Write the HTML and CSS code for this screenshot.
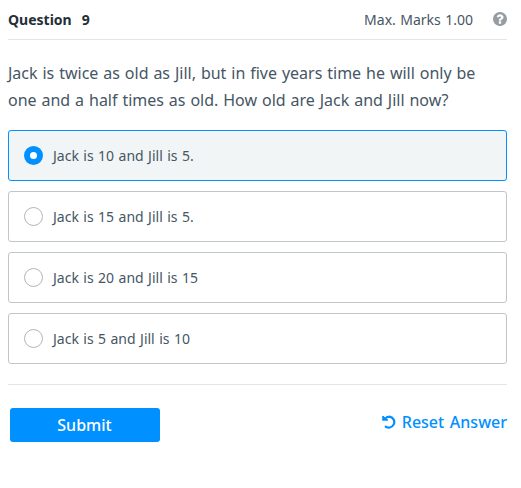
FILE: index.html
```html
<!DOCTYPE html>
<html lang="en">
<head>
<meta charset="utf-8">
<title>Question 9</title>
<link rel="stylesheet" href="styles.css">
</head>
<body>
<main class="quiz">
  <header class="header">
    <h1 class="title">Question <span class="number">9</span></h1>
    <div class="marks">Max. Marks 1.00
      <svg class="help" viewBox="128 128 1536 1536"><path fill="#959da3" d="M1024 1376v-192q0-14-9-23t-23-9h-192q-14 0-23 9t-9 23v192q0 14 9 23t23 9h192q14 0 23-9t9-23zm256-672q0-88-55.5-163t-138.5-116-170-41q-243 0-371 213-15 24 8 42l132 100q7 6 19 6 16 0 25-12 53-68 86-92 34-24 86-24 48 0 85.5 26t37.5 59q0 38-20 61t-68 45q-63 28-115.5 86.5t-52.5 125.5v36q0 14 9 23t23 9h192q14 0 23-9t9-23q0-19 21.5-49.5t54.5-49.5q32-18 49-28.5t46-35 44.5-48 28-60.5 12.5-81zm384 192q0 209-103 385.5t-279.5 279.5-385.5 103-385.5-103-279.5-279.5-103-385.5 103-385.5 279.5-279.5 385.5-103 385.5 103 279.5 279.5 103 385.5z"/></svg>
    </div>
  </header>
  <p class="question"><span class="line">Jack is twice as old as Jill, but in five years time he will only be</span> <span class="line last">one and a half times as old. How old are Jack and Jill now?</span></p>
  <div class="options">
    <label class="option selected"><span class="radio"></span><span class="label">Jack is 10 and Jill is 5.</span></label>
    <label class="option"><span class="radio"></span><span class="label">Jack is 15 and Jill is 5.</span></label>
    <label class="option"><span class="radio"></span><span class="label">Jack is 20 and Jill is 15</span></label>
    <label class="option"><span class="radio"></span><span class="label">Jack is 5 and Jill is 10</span></label>
  </div>
  <footer class="footer">
    <button class="submit">Submit</button>
    <a class="reset"><svg class="undo" viewBox="0 0 14 14"><path d="M2.8 3.9C4 2.4 5.5 1.6 7.4 1.6A5.5 5.5 0 1 1 3 11.1" fill="none" stroke="#0090ff" stroke-width="2.2"/><path d="M.2 1H1.6L3.8 3.2L6 4.4V5.8H.2Z" fill="#0090ff"/></svg>Reset Answer</a>
  </footer>
</main>
</body>
</html>
```
FILE: styles.css
```css
* { box-sizing: border-box; }
body { margin: 0; background: #fff; color: #465664; font-family: "Noto Sans", sans-serif; word-spacing: 0.8px; }
.quiz { width: 499px; margin-left: 8px; }
.header { display: flex; justify-content: space-between; align-items: center; height: 40px; border-bottom: 1px solid #e4e6e6; }
.title { margin: 0; font-size: 14px; font-weight: 700; color: #232f39; }
.number { margin-left: 5.5px; }
.marks { display: flex; align-items: center; gap: 20px; font-size: 14px; }
.help { width: 14px; height: 14px; margin-top: -1px; }
.question { margin: 20px 0 16px; font-size: 16px; line-height: 27px; word-spacing: 0.75px; }
.line { display: block; white-space: nowrap; }
.options { display: grid; gap: 10px; }
.option { display: flex; align-items: center; height: 51px; padding-left: 15px; border: 1px solid #c0c6c8; border-radius: 3px; font-size: 14px; }
.selected { background: #f1f5f6; border-color: #0090ff; }
.radio { width: 19px; height: 19px; margin-right: 10px; border: 1px solid #b5b5b5; border-radius: 50%; background: #fff; }
.selected .radio { border: 6px solid #0090ff; }
.footer { display: flex; justify-content: space-between; margin-top: 20px; padding: 23px 0 0 2px; border-top: 1px solid #e4e6e6; }
.submit { width: 150px; height: 34px; padding: 0 1px 0 0; border: 0; border-radius: 3px; background: #0090ff; color: #fff; font: 500 16px "Noto Sans", sans-serif; }
.reset { display: flex; align-items: center; gap: 5.6px; height: 28px; color: #0090ff; font-size: 16px; font-weight: 500; word-spacing: 1.5px; }
.undo { width: 14px; height: 14px; }
```
